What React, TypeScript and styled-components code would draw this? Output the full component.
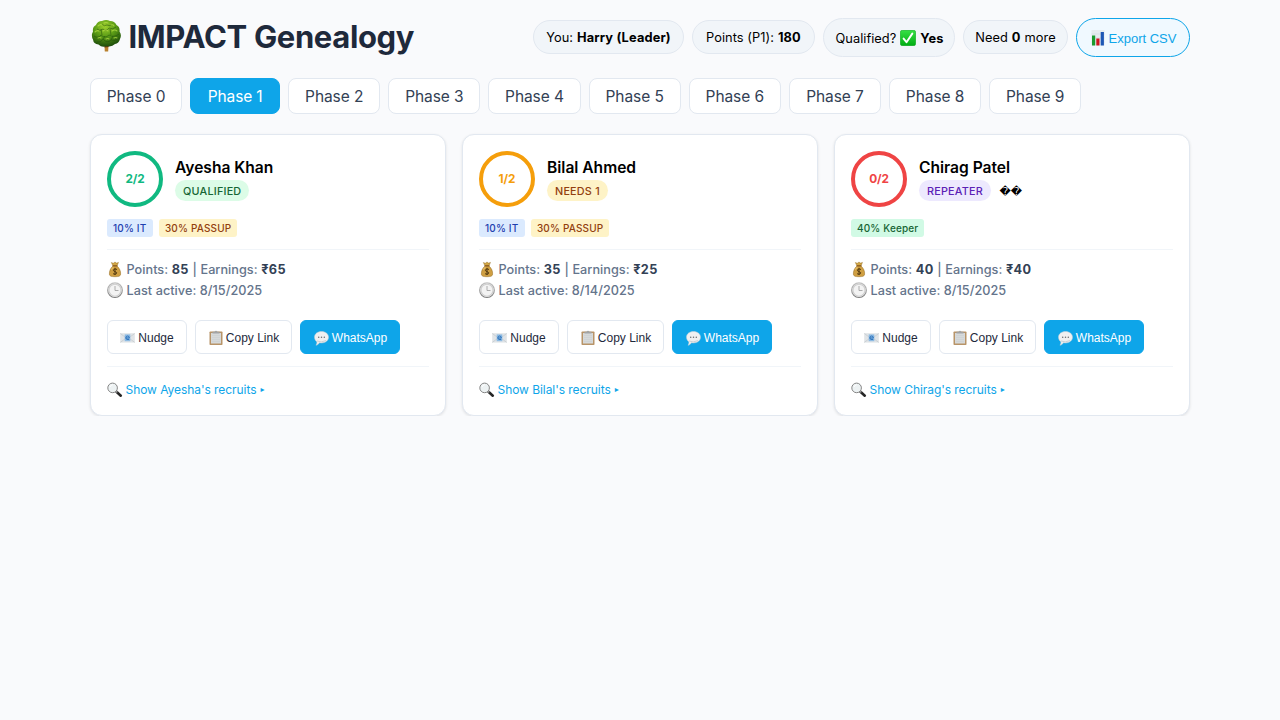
import React from 'react';
import styled, { createGlobalStyle, css } from 'styled-components';

const GlobalStyle = createGlobalStyle`
  *, *::before, *::after { box-sizing: border-box; }
  body {
    margin: 0;
    background: #f9fafc;
    color: #000;
    font-family: Inter, "Liberation Sans", sans-serif;
  }
  button { font-family: "Liberation Sans", Arial, sans-serif; margin: 0; }
  svg { display: block; flex: none; }
`;

const Page = styled.main`
  width: 1100px;
  margin: 0 auto;
  padding-top: 18px;
`;

const Header = styled.header`
  display: flex;
  align-items: center;
  justify-content: space-between;
  height: 39px;
`;

const Title = styled.h1`
  display: flex;
  align-items: center;
  gap: 6.5px;
  margin: 0;
  padding-bottom: 3px;
  font-size: 31px;
  line-height: 36px;
  font-weight: 700;
  letter-spacing: -0.36px;
  color: #1e293b;
  span { padding-top: 2px; }
`;

const Stats = styled.div`
  display: flex;
  align-items: center;
  gap: 8px;
`;

const pill = css`
  display: flex;
  align-items: center;
  justify-content: center;
  border-radius: 999px;
  font-size: 13px;
  line-height: 16px;
  white-space: nowrap;
`;

const Pill = styled.div<{ $width: number; $tall?: boolean }>`
  ${pill}
  gap: 4px;
  width: ${p => p.$width}px;
  height: ${p => (p.$tall ? 39 : 34)}px;
  margin-bottom: ${p => (p.$tall ? 0 : 1)}px;
  padding: ${p => (p.$tall ? '1px 0 0 1px' : '1px 0 0')};
  background: #f1f5f9;
  border: 1px solid #e2e8f0;
  font-size: 12.8px;
  letter-spacing: 0.05px;
  b { letter-spacing: 0.15px; }
  b, span { padding-top: 1px; }
`;

const ExportButton = styled.button`
  ${pill}
  gap: 4px;
  width: 114px;
  height: 39px;
  padding: 1px 0 0 1px;
  background: #f0f9ff;
  border: 1px solid #0ea5e9;
  color: #0ea5e9;
  svg { margin-bottom: 1px; }
  span { padding-top: 1px; }
`;

const Tabs = styled.nav`
  display: flex;
  gap: 8px;
  margin-top: 21px;
`;

const Tab = styled.button<{ $active?: boolean }>`
  width: ${p => (p.$active ? 90 : 92.15)}px;
  height: 36px;
  padding: 1px 0 0;
  border: 1px solid ${p => (p.$active ? '#0ea5e9' : '#e2e8f0')};
  border-radius: 8px;
  background: ${p => (p.$active ? '#0ea5e9' : '#fff')};
  color: ${p => (p.$active ? '#fff' : '#334155')};
  font-family: Inter, sans-serif;
  font-size: 15.5px;
  line-height: 20px;
  letter-spacing: ${p => (p.$active ? -0.15 : -0.08)}px;
`;

const Grid = styled.section`
  display: grid;
  grid-template-columns: repeat(3, 1fr);
  gap: 16px;
  margin-top: 20px;
`;

const Card = styled.article`
  height: 282px;
  padding: 16px;
  background: #fff;
  border: 1px solid #e2e8f0;
  border-radius: 12px;
  box-shadow: 0 1px 3px rgba(0, 0, 0, 0.1);
`;

const Profile = styled.div`
  display: flex;
  align-items: center;
  gap: 12px;
`;

const Ring = styled.div<{ $color: string }>`
  display: flex;
  align-items: center;
  justify-content: center;
  width: 56px;
  height: 56px;
  padding-top: 1px;
  border: 4px solid ${p => p.$color};
  border-radius: 50%;
  color: ${p => p.$color};
  font-size: 11.8px;
  line-height: 15px;
  font-weight: 700;
  letter-spacing: -0.1px;
`;

const Name = styled.h2`
  margin: 0 0 3px;
  padding-top: 1px;
  font-size: 15.6px;
  line-height: 19px;
  font-weight: 600;
  letter-spacing: -0.02px;
`;

const BadgeRow = styled.div`
  display: flex;
  align-items: center;
  gap: 8.5px;
`;

const Badge = styled.span<{ $bg: string; $fg: string }>`
  height: 21px;
  padding: 0 8px;
  border-radius: 999px;
  background: ${p => p.$bg};
  color: ${p => p.$fg};
  font-size: 10.8px;
  line-height: 23px;
  font-weight: 500;
  letter-spacing: 0.22px;
`;

const Unknown = styled.span`
  padding-top: 1px;
  font: 11px/21px "DejaVu Sans", sans-serif;
`;

const Tags = styled.div`
  display: flex;
  gap: 6px;
  margin-top: 12px;
`;

const Tag = styled.span<{ $bg: string; $fg: string }>`
  height: 18px;
  padding: 0 6px;
  border-radius: 3px;
  background: ${p => p.$bg};
  color: ${p => p.$fg};
  font-size: 10px;
  line-height: 19px;
  font-weight: 500;
  letter-spacing: 0.16px;
  &:first-child:not(:last-child) { padding-right: 6.5px; }
`;

const Details = styled.div`
  margin-top: 12px;
  padding-top: 9px;
  border-top: 1px solid #f1f5f9;
  color: #64748b;
  font-size: 12.7px;
  font-weight: 450;
`;

const Line = styled.div`
  display: flex;
  align-items: center;
  gap: 3.5px;
  height: 21px;
  letter-spacing: 0.02px;
  word-spacing: 0.2px;
  b { color: #334155; letter-spacing: 0.4px; }
`;

const Actions = styled.div`
  display: flex;
  gap: 8px;
  margin-top: 19px;
`;

const Action = styled.button<{ $width: number; $primary?: boolean }>`
  display: flex;
  align-items: center;
  justify-content: center;
  gap: 3px;
  width: ${p => p.$width}px;
  height: 34px;
  padding: 2px 0 0;
  border: 1px solid ${p => (p.$primary ? '#0ea5e9' : '#e2e8f0')};
  border-radius: 6px;
  background: ${p => (p.$primary ? '#0ea5e9' : '#fff')};
  color: ${p => (p.$primary ? '#fff' : '#1e293b')};
  font-size: 12px;
  white-space: nowrap;
  &:not(:first-child) { padding-left: 1px; }
`;

const Recruits = styled.div`
  display: flex;
  align-items: center;
  gap: 2.5px;
  height: 46px;
  margin-top: 12px;
  border-top: 1px solid #f1f5f9;
  color: #0ea5e9;
  font-size: 12px;
  letter-spacing: -0.06px;
`;

const Arrow = styled.span`
  margin-left: 1.5px;
  font: 8px/12px "DejaVu Sans", sans-serif;
`;

const TreeIcon = () => (
  <svg width="32" height="34" viewBox="0 0 32 34">
    <defs>
      <radialGradient id="leaf" cx="0.45" cy="0.25" r="0.75">
        <stop offset="0" stopColor="#9ccf2c" />
        <stop offset="0.5" stopColor="#5a9b16" />
        <stop offset="1" stopColor="#1d4d0b" />
      </radialGradient>
    </defs>
    <path d="M14.4 25h4.2l-.4 7.6h-3.4z" fill="#b9812f" />
    <path d="M14.4 25h4.2v3l-4.1.6z" fill="#5a3c12" />
    <path d="M12 2.1Q16-.1 20 2Q24.5 1.9 26.5 6Q30.200 8 29.500 12.5Q32 16 30 20Q28.800 24.5 25 25Q21.500 28.500 16.500 27Q12 29 8.500 25.500Q3.500 25 3 20.500Q.8 16.500 3 12.500Q2.200 8 6 6Q7.500 2.300 12 2.100Z" fill="url(#leaf)" />
    <g fill="none" stroke="#214f0b" strokeWidth="0.8" opacity="0.65">
      <path d="M7 10q3 3 6 0q3 3 6-1q4 2 7-1M4 17q4 3 7-1q4 4 8 0q5 3 10-1M7 23q4 1 6-3q4 5 8 1q4 2 7-2M12 5q2 3 5 1q3 2 6-1M11 10l1 6M20 10l1 6M15 17l-2 3M23 17l-2 4" />
    </g>
    <g fill="none" stroke="#b5dd47" strokeWidth="1.1" opacity="0.75" strokeLinecap="round">
      <path d="M8 7q2-2 4-1M14 4q2-1 4 0M21 6q2-1 3 1M5 13q2-2 4-1M13 12q3-2 5 0M22 12q3-2 5 0M8 19q2-1 3 0M16 20q2-1 3 0M24 19q2-1 3 0" />
    </g>
  </svg>
);

const CheckIcon = () => (
  <svg width="16" height="16" viewBox="0 0 16 16">
    <defs>
      <linearGradient id="check" x2="0" y2="1">
        <stop stopColor="#36e046" />
        <stop offset="1" stopColor="#00ad12" />
      </linearGradient>
    </defs>
    <rect x="0.3" y="0.3" width="15.4" height="15.4" rx="2.2" fill="url(#check)" stroke="#0aa51d" strokeWidth="0.6" />
    <path d="M3.6 8.6l2.9 3.6 5.8-8.600" fill="none" stroke="#fff" strokeWidth="1.9" strokeLinecap="round" strokeLinejoin="round" />
  </svg>
);

const ChartIcon = () => (
  <svg width="14" height="16" viewBox="0 0 14 16">
    <rect x="0.5" width="13" height="15.5" fill="#e6ecef" />
    <path d="M.5 4h13M.5 8h13M.5 12h13" stroke="#cbd6dc" strokeWidth="0.5" />
    <rect x="1" y="5.5" width="3.2" height="10" fill="#1b9a2e" />
    <rect x="5.3" y="8.5" width="3.2" height="7" fill="#cf1420" />
    <rect x="9.7" y="2" width="3.2" height="13.5" fill="#1d57b5" />
  </svg>
);

const MoneyIcon = () => (
  <svg width="16" height="17" viewBox="0 0 16 17">
    <path d="M4.3 1.5l2 .7L8 1l1.5 1.1 2-.7L10 5H6z" fill="#d0a544" stroke="#8a6420" strokeWidth="0.4" />
    <path d="M6 5h4c2.5 2 3.9 5.5 3.6 8.3-.3 2-2 2.4-5.6 2.4s-5.3-.4-5.600-2.400C2.100 10.500 3.500 7 6 5z" fill="#cf9f42" stroke="#93691f" strokeWidth="0.5" />
    <path d="M5.600 4.800h4.800" stroke="#8a5920" strokeWidth="1.1" />
    <path d="M4.500 8.500Q5 7 6.500 6.300" fill="none" stroke="#edca78" />
    <path d="M10 8.500Q8 7.300 6.700 8.500T8 10.600T9.400 12.700T6 12.700M8 6.900v7.100" fill="none" stroke="#46300c" strokeWidth="0.9" />
  </svg>
);

const ClockIcon = () => (
  <svg width="16" height="17" viewBox="0 0 16 17">
    <defs>
      <linearGradient id="rim" x2="0" y2="1">
        <stop stopColor="#c2c2c2" />
        <stop offset="1" stopColor="#7d7d7d" />
      </linearGradient>
    </defs>
    <circle cx="8" cy="8.2" r="7.3" fill="#f3f3f3" stroke="url(#rim)" strokeWidth="1.2" />
    <circle cx="8" cy="8.2" r="6" fill="none" stroke="#cfcfcf" strokeWidth="1.1" />
    <path d="M8 4v4.500h3.500" fill="none" stroke="#999" strokeWidth="0.8" />
  </svg>
);

const EnvelopeIcon = () => (
  <svg width="15" height="10" viewBox="0 0 15 10">
    <rect x="0.2" y="0.2" width="14.6" height="9.4" fill="#e0e4e7" />
    <path d="M.3.5l6 4.4-6 4.500M14.700.500l-6 4.400 6 4.500" fill="none" stroke="#c2c8cd" strokeWidth="0.7" />
    <rect x="4.700" y="1.400" width="5.600" height="6.800" fill="#8dbbe3" />
    <path d="M5.800 5h3.600Q9.300 3 7.600 3Q5.800 3 5.800 5Q5.900 7.100 9.200 6.500" fill="none" stroke="#2f74bd" strokeWidth="1" />
  </svg>
);

const ClipboardIcon = () => (
  <svg width="14" height="16" viewBox="0 0 14 16">
    <rect x="0.5" y="1.5" width="13" height="13.5" rx="0.8" fill="#b89468" />
    <rect x="2" y="3" width="10" height="10.5" fill="#d6d9da" />
    <path d="M3 5.500h8M3 7.500h8M3 9.500h8M3 11.500h8" stroke="#c8cccf" strokeWidth="0.5" />
    <path d="M3.500 1.800h2Q7-.200 8.500 1.800h2v1.700h-7z" fill="#a2a4a5" />
  </svg>
);

const BubbleIcon = () => (
  <svg width="15" height="15" viewBox="0 0 15 15">
    <path d="M7.500.500c4 0 7 2.400 7 5.700s-3 5.700-7 5.700c-.7 0-1.400-.1-2-.2-1 1.500-2.300 2.500-3.500 2.600.8-1.200 1-2.300.9-3.500C1.400 9.700.500 8.100.500 6.200.500 2.900 3.500.500 7.500.500z" fill="#eff0f1" stroke="#c5ced4" strokeWidth="0.5" />
    <path d="M3 10Q7 12 12 9.600" fill="none" stroke="#c4c8cb" strokeWidth="0.8" />
    <g fill="#686d72"><circle cx="4.700" cy="6.300" r="0.75" /><circle cx="7.500" cy="6.300" r="0.75" /><circle cx="10.300" cy="6.300" r="0.75" /></g>
  </svg>
);

const SearchIcon = () => (
  <svg width="16" height="16" viewBox="0 0 16 16">
    <path d="M9.500 9.700l4.300 4" stroke="#252525" strokeWidth="2.6" strokeLinecap="round" />
    <path d="M8.800 9l1.500 1.400" stroke="#999" strokeWidth="1.5" />
    <circle cx="5.600" cy="5.900" r="4.800" fill="#edf2f3" stroke="#858585" strokeWidth="1" />
    <path d="M3 5Q3.500 3 5.800 2.700" fill="none" stroke="#fff" strokeWidth="1" />
  </svg>
);

type Tone = { $bg: string; $fg: string };
const green: Tone = { $bg: '#dcfce7', $fg: '#166534' };
const mint: Tone = { $bg: '#d1fae5', $fg: '#166534' };
const amber: Tone = { $bg: '#fef3c7', $fg: '#92400e' };
const violet: Tone = { $bg: '#ede9fe', $fg: '#5b21b6' };
const blue: Tone = { $bg: '#dbeafe', $fg: '#1e40af' };

const passup = [
  { label: '10% IT', tone: blue },
  { label: '30% PASSUP', tone: amber },
];

const members = [
  { name: 'Ayesha Khan', count: '2/2', ring: '#10b981', badge: 'QUALIFIED', tone: green, tags: passup, points: 85, earned: 65, active: '8/15/2025' },
  { name: 'Bilal Ahmed', count: '1/2', ring: '#f59e0b', badge: 'NEEDS 1', tone: amber, tags: passup, points: 35, earned: 25, active: '8/14/2025' },
  { name: 'Chirag Patel', count: '0/2', ring: '#ef4444', badge: 'REPEATER', tone: violet, extra: '\uFFFD\uFFFD', tags: [{ label: '40% Keeper', tone: mint }], points: 40, earned: 40, active: '8/15/2025' },
];

export default function App() {
  return (
    <>
      <GlobalStyle />
      <Page>
        <Header>
          <Title><TreeIcon /><span>IMPACT Genealogy</span></Title>
          <Stats>
            <Pill $width={151}><span>You:</span><b>Harry (Leader)</b></Pill>
            <Pill $width={123}><span>Points (P1):</span><b>180</b></Pill>
            <Pill $width={132} $tall><span>Qualified?</span><CheckIcon /><b>Yes</b></Pill>
            <Pill $width={105}><span>Need</span><b>0</b><span>more</span></Pill>
            <ExportButton><ChartIcon /><span>Export CSV</span></ExportButton>
          </Stats>
        </Header>
        <Tabs>
          {Array.from({ length: 10 }, (_, i) => (
            <Tab key={i} $active={i === 1}>Phase {i}</Tab>
          ))}
        </Tabs>
        <Grid>
          {members.map(m => (
            <Card key={m.name}>
              <Profile>
                <Ring $color={m.ring}>{m.count}</Ring>
                <div>
                  <Name>{m.name}</Name>
                  <BadgeRow>
                    <Badge {...m.tone}>{m.badge}</Badge>
                    {m.extra && <Unknown>{m.extra}</Unknown>}
                  </BadgeRow>
                </div>
              </Profile>
              <Tags>
                {m.tags.map(t => <Tag key={t.label} {...t.tone}>{t.label}</Tag>)}
              </Tags>
              <Details>
                <Line><MoneyIcon /><span>Points: <b>{m.points}</b> | Earnings: <b>₹{m.earned}</b></span></Line>
                <Line><ClockIcon /><span>Last active: {m.active}</span></Line>
              </Details>
              <Actions>
                <Action $width={80}><EnvelopeIcon />Nudge</Action>
                <Action $width={97}><ClipboardIcon />Copy Link</Action>
                <Action $width={100} $primary><BubbleIcon />WhatsApp</Action>
              </Actions>
              <Recruits>
                <SearchIcon />
                <span>Show {m.name.split(' ')[0]}'s recruits</span>
                <Arrow>▸</Arrow>
              </Recruits>
            </Card>
          ))}
        </Grid>
      </Page>
    </>
  );
}
